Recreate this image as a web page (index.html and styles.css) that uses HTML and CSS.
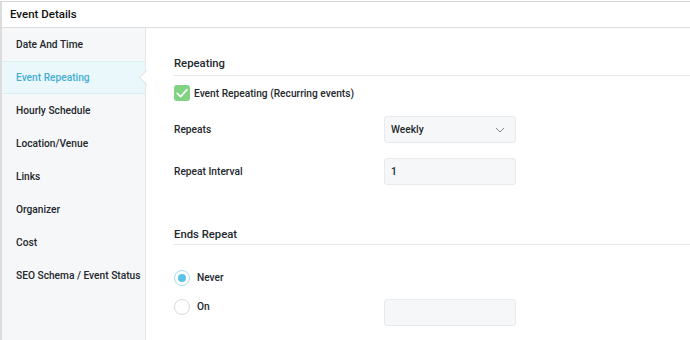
FILE: index.html
```html
<!DOCTYPE html>
<html lang="en">
<head>
  <meta charset="UTF-8">
  <title>Event Details</title>
  <link rel="stylesheet" href="styles.css">
</head>
<body>

<div class="panel">
  <div class="panel-head">Event Details</div>

  <div class="panel-body">
    <ul class="tabs">
      <li>Date And Time</li>
      <li class="active">Event Repeating</li>
      <li>Hourly Schedule</li>
      <li>Location/Venue</li>
      <li>Links</li>
      <li>Organizer</li>
      <li>Cost</li>
      <li>SEO Schema / Event Status</li>
    </ul>

    <div class="content">
      <h3 class="section-title">Repeating</h3>

      <label class="check">
        <span class="box">
          <svg width="16" height="16" viewBox="0 0 16 16"><path d="M3.2 8.2 L6.6 11.6 L13 4.6" fill="none" stroke="#fff" stroke-width="1.6" stroke-linecap="round" stroke-linejoin="round"/></svg>
        </span>
        Event Repeating (Recurring events)
      </label>

      <div class="fields">
        <div class="label">Repeats</div>
        <div class="field select">
          Weekly
          <svg width="10" height="6" viewBox="0 0 10 6"><path d="M1 1 L5 5 L9 1" fill="none" stroke="#888" stroke-width="1"/></svg>
        </div>
        <div class="label">Repeat Interval</div>
        <div class="field">1</div>
      </div>

      <h3 class="section-title second">Ends Repeat</h3>

      <div class="fields radios">
        <label class="radio checked"><span class="dot"></span>Never</label>
        <div></div>
        <label class="radio"><span class="dot"></span>On</label>
        <div class="field empty"></div>
      </div>
    </div>
  </div>
</div>

</body>
</html>
```

FILE: styles.css
```css
* {
  margin: 0;
  padding: 0;
  box-sizing: border-box;
}
body {
  font-family: 'Roboto', 'Liberation Sans', sans-serif;
  font-size: 10.2px;
  font-weight: 500;
  color: #23282d;
  background: #fff;
  height: 340px;
  overflow: hidden;
}
.panel {
  margin-top: 1px;
  border-top: 1px solid #d6d6d6;
  border-left: 2px solid #dcdcdc;
  height: 339px;
  display: flex;
  flex-direction: column;
}
.panel-head {
  height: 26px;
  line-height: 25px;
  padding-left: 8px;
  font-size: 11.5px;
  font-weight: 500;
  color: #111;
  border-bottom: 1px solid #dcdcdc;
}
.panel-body {
  display: flex;
  flex: 1;
  min-height: 0;
}
.tabs {
  list-style: none;
  width: 144px;
  flex: none;
  background: #f6f7f9;
  border-right: 1px solid #e4e6ea;
}
.tabs li {
  height: 33px;
  line-height: 33px;
  padding-left: 14px;
  white-space: nowrap;
  position: relative;
}
.tabs li.active {
  background: #eaf7fb;
  color: #45aed4;
  border-top: 1px solid #dbeef4;
  border-bottom: 1px solid #dbeef4;
  line-height: 31px;
}
.tabs li.active::after {
  content: "";
  position: absolute;
  right: -7px;
  top: 10px;
  width: 10px;
  height: 10px;
  background: #fff;
  border-left: 1px solid #dbe3e8;
  border-bottom: 1px solid #dbe3e8;
  transform: rotate(45deg);
}
.content {
  flex: 1;
  padding: 28px 0 0 28px;
}
.section-title {
  font-size: 11.3px;
  font-weight: 500;
  line-height: 16px;
  padding-bottom: 3px;
  border-bottom: 1px solid #e6e7ea;
}
.section-title.second {
  margin-top: 42px;
  padding-bottom: 1px;
}
.check {
  display: flex;
  align-items: center;
  gap: 4px;
  margin-top: 9px;
}
.box {
  width: 16px;
  height: 16px;
  border-radius: 3px;
  background: #7fd383;
  display: flex;
}
.fields {
  display: grid;
  grid-template-columns: 210px 132px;
  row-gap: 15px;
  align-items: center;
  margin-top: 15px;
}
.field {
  height: 27px;
  background: #f6f7f9;
  border: 1px solid #e9eaed;
  border-radius: 3px;
  display: flex;
  align-items: center;
  justify-content: space-between;
  padding: 0 10px 0 6px;
}
.field.select svg {
  margin-top: 1px;
}
.radios {
  margin-top: 24px;
  row-gap: 13px;
  align-items: start;
}
.radios .field {
  margin-top: 1px;
}
.radio {
  display: flex;
  align-items: center;
  gap: 7px;
}
.dot {
  width: 16px;
  height: 16px;
  border-radius: 50%;
  border: 1px solid #d9dadd;
  background: #fff;
  position: relative;
  top: 1px;
}
.radio.checked .dot {
  border-color: #a9dcef;
}
.radio.checked .dot::after {
  content: "";
  position: absolute;
  left: 3px;
  top: 3px;
  width: 8px;
  height: 8px;
  border-radius: 50%;
  background: #5bc2e8;
}
```
